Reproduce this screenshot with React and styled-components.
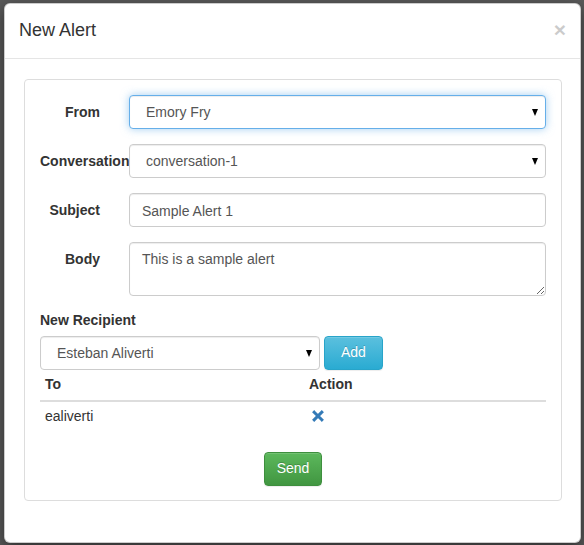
import React from "react";
import styled, { createGlobalStyle } from "styled-components";

const GlobalStyles = createGlobalStyle`
  html, body {
    margin: 0;
    padding: 0;
    background: #5a5a5a;
  }
  body {
    font-family: "Liberation Sans", Arial, sans-serif;
    font-size: 14px;
    line-height: 1.42857;
    color: #333;
  }
  * { box-sizing: border-box; }
`;

const Backdrop = styled.div`
  height: 545px;
  padding: 3px 3px 2px 4px;
  background: #5a5a5a;
`;

const Modal = styled.div`
  width: 577px;
  height: 540px;
  background: #fff;
  border: 1px solid rgba(0, 0, 0, 0.2);
  border-radius: 6px;
  box-shadow: 0 5px 15px rgba(0, 0, 0, 0.5);
  overflow: hidden;
`;

const Header = styled.div`
  display: flex;
  align-items: center;
  justify-content: space-between;
  padding: 14px 14px 14px 14px;
  border-bottom: 1px solid #e5e5e5;
`;

const Title = styled.h4`
  margin: 0;
  font-size: 18px;
  font-weight: 500;
  line-height: 1.42857;
  color: #333;
`;

const Close = styled.button`
  border: 0;
  background: none;
  padding: 0;
  font-family: inherit;
  font-size: 21px;
  font-weight: bold;
  line-height: 1;
  color: #000;
  opacity: 0.2;
  margin-top: -2px;
`;

const Body = styled.div`
  padding: 20px 18px 20px 19px;
`;

const Panel = styled.div`
  border: 1px solid #ddd;
  border-radius: 4px;
  padding: 15px 15px 14px 15px;
`;

const FormRow = styled.div`
  display: grid;
  grid-template-columns: 60px 1fr;
  column-gap: 29px;
  margin-bottom: 15px;
`;

const Label = styled.label`
  display: block;
  padding-top: 8px;
  font-weight: bold;
  text-align: right;
  white-space: nowrap;
`;

const controlBase = `
  display: block;
  width: 100%;
  height: 34px;
  font-family: "Liberation Sans", Arial, sans-serif;
  font-size: 14px;
  line-height: 1.42857;
  color: #555;
  background: #fff;
  border: 1px solid #ccc;
  border-radius: 4px;
  box-shadow: inset 0 1px 1px rgba(0, 0, 0, 0.075);
  outline: none;
`;

const Input = styled.input`
  ${controlBase}
  padding: 7px 12px 5px;
`;

const TextArea = styled.textarea`
  ${controlBase}
  height: 54px;
  padding: 7px 12px 5px;
  resize: vertical;
`;

const SelectWrap = styled.div`
  position: relative;
  width: ${(p) => p.$width || "100%"};
`;

const Select = styled.select`
  ${controlBase}
  appearance: none;
  -webkit-appearance: none;
  padding: 7px 24px 5px 16px;
  ${(p) =>
    p.$focused &&
    `
    border-color: #66afe9;
    box-shadow: inset 0 1px 1px rgba(0,0,0,.075), 0 0 8px rgba(102,175,233,.6);
  `}
`;

const Caret = styled.span`
  position: absolute;
  right: 8px;
  top: 14px;
  width: 0;
  height: 0;
  border-left: 3.5px solid transparent;
  border-right: 3.5px solid transparent;
  border-top: 7px solid #000;
  pointer-events: none;
`;

const SectionLabel = styled.label`
  display: block;
  font-weight: bold;
  margin-bottom: 5px;
`;

const InlineRow = styled.div`
  display: flex;
  gap: 4px;
`;

const Button = styled.button`
  height: 34px;
  padding: 6px ${(p) => p.$padX || 16}px;
  font-family: "Liberation Sans", Arial, sans-serif;
  font-size: 14px;
  line-height: 1.42857;
  color: #fff;
  border-radius: 4px;
  border: 1px solid ${(p) => (p.$variant === "success" ? "#3e8f3e" : "#28a4c9")};
  background: ${(p) =>
    p.$variant === "success"
      ? "linear-gradient(to bottom, #5cb85c 0%, #419641 100%)"
      : "linear-gradient(to bottom, #5bc0de 0%, #2aabd2 100%)"};
  box-shadow: inset 0 1px 0 rgba(255, 255, 255, 0.15), 0 1px 1px rgba(0, 0, 0, 0.075);
  text-shadow: 0 -1px 0 rgba(0, 0, 0, 0.2);
`;

const Table = styled.table`
  width: 100%;
  border-collapse: collapse;
  margin-bottom: 20px;
`;

const Th = styled.th`
  text-align: left;
  padding: 5px;
  line-height: 1.42857;
  border-bottom: 2px solid #ddd;
  width: ${(p) => p.$width || "auto"};
`;

const Td = styled.td`
  padding: 5px;
  line-height: 1.42857;
  border-top: 1px solid #fff;
`;

const Footer = styled.div`
  display: flex;
  justify-content: center;
`;

const RemoveIcon = () => (
  <svg width="12" height="12" viewBox="0 0 12 12" style={{ display: "block", marginLeft: 3, marginTop: -2 }}>
    <path d="M2.2 2.2 L9.8 9.8 M9.8 2.2 L2.2 9.8" stroke="#337ab7" strokeWidth="3" strokeLinecap="square" />
  </svg>
);

const FieldSelect = ({ value, focused, width }) => (
  <SelectWrap $width={width}>
    <Select defaultValue={value} $focused={focused}>
      <option>{value}</option>
    </Select>
    <Caret />
  </SelectWrap>
);

export default function App() {
  return (
    <Backdrop>
      <GlobalStyles />
      <Modal>
        <Header>
          <Title>New Alert</Title>
          <Close>×</Close>
        </Header>
        <Body>
          <Panel>
            <FormRow>
              <Label>From</Label>
              <FieldSelect value="Emory Fry" focused />
            </FormRow>
            <FormRow>
              <Label>Conversation</Label>
              <FieldSelect value="conversation-1" />
            </FormRow>
            <FormRow>
              <Label>Subject</Label>
              <Input defaultValue="Sample Alert 1" />
            </FormRow>
            <FormRow>
              <Label>Body</Label>
              <TextArea defaultValue="This is a sample alert" />
            </FormRow>

            <SectionLabel>New Recipient</SectionLabel>
            <InlineRow>
              <FieldSelect value="Esteban Aliverti" width="280px" />
              <Button>Add</Button>
            </InlineRow>

            <Table>
              <thead>
                <tr>
                  <Th $width="264px">To</Th>
                  <Th>Action</Th>
                </tr>
              </thead>
              <tbody>
                <tr>
                  <Td>ealiverti</Td>
                  <Td>
                    <RemoveIcon />
                  </Td>
                </tr>
              </tbody>
            </Table>

            <Footer>
              <Button $variant="success" $padX={12}>Send</Button>
            </Footer>
          </Panel>
        </Body>
      </Modal>
    </Backdrop>
  );
}
